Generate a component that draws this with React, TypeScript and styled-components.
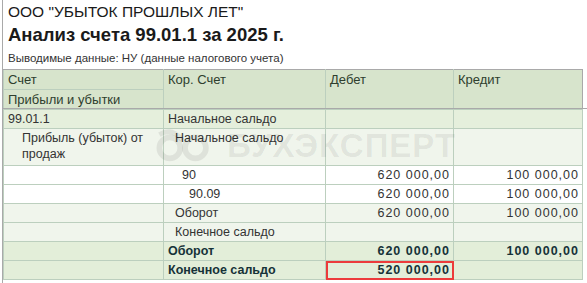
import React from 'react'
import styled, { createGlobalStyle } from 'styled-components'

const GlobalStyle = createGlobalStyle`
    html, body {
        margin: 0;
        padding: 0;
        background: #ffffff;
    }
    body {
        font-family: 'Liberation Sans', Arial, sans-serif;
        color: #333333;
    }
`

const Sheet = styled.div`
    margin-left: 2px;
    border-left: 1px solid #a9a9a9;
    height: 283px;
    overflow: hidden;
    position: relative;
`

const Heading = styled.div`
    padding: 2px 0 0 5px;
    height: 68px;
    box-sizing: border-box;
`

const Company = styled.div`
    font-size: 15.5px;
    line-height: 19px;
    color: #1a1a1a;
`

const Title = styled.div`
    font-size: 18.5px;
    line-height: 24px;
    margin-top: 2px;
    font-weight: 700;
    color: #1a1a1a;
`

const Subtitle = styled.div`
    font-size: 11.5px;
    line-height: 16px;
    margin-top: 3px;
    color: #333333;
`

const TableWrap = styled.div`
    position: relative;
    margin-top: 1px;
    &::after {
        content: '';
        position: absolute;
        left: -3px;
        right: -10px;
        top: 39px;
        height: 1px;
        background: #a9a9a9;
    }
`

const Table = styled.table`
    border-collapse: collapse;
    table-layout: fixed;
    width: 579px;
    font-size: 12px;
`

const HeadCell = styled.th<{ $tall?: boolean }>`
    background: #d7e4cc;
    color: #2e3e2e;
    font-weight: 400;
    text-align: left;
    vertical-align: top;
    padding: 2px 4px 0 4px;
    height: ${p => (p.$tall ? 37 : 17)}px;
    line-height: 16px;
    border: 1px solid #bccfbe;
    border-top-color: #a9a9a9;
    font-size: 13px;
    &:last-child {
        border-right-color: #a9a9a9;
    }
`

const HeadSub = styled(HeadCell)`
    border-top-color: #bccfbe;
`

type Tone = 'group' | 'soft' | 'plain' | 'total'

const tones: Record<Tone, string> = {
    group: '#e5efdc',
    soft: '#f0f5ec',
    plain: '#ffffff',
    total: '#e3eed9',
}

const Row = styled.tr<{ $tone: Tone }>`
    background: ${p => tones[p.$tone]};
    color: ${p => (p.$tone === 'total' ? '#163238' : '#333333')};
    font-weight: ${p => (p.$tone === 'total' ? 700 : 400)};
`

const Cell = styled.td<{ $indent?: number; $num?: boolean }>`
    border: 1px solid #bccfbe;
    padding: 1px ${p => (p.$num ? 3 : 4)}px 0 ${p => 4 + (p.$indent ?? 0)}px;
    height: 19px;
    box-sizing: border-box;
    line-height: 16px;
    vertical-align: top;
    text-align: ${p => (p.$num ? 'right' : 'left')};
    letter-spacing: ${p => (p.$num ? '1px' : 'normal')};
    font-size: 12.5px;
`

const MarkedCell = styled(Cell)`
    outline: 2px solid #ec3b3b;
    outline-offset: -2px;
`

const Watermark = styled.div`
    position: absolute;
    left: 150px;
    top: 58px;
    display: flex;
    align-items: center;
    gap: 10px;
    color: rgba(0, 0, 0, 0.075);
    font-size: 33px;
    font-weight: 700;
    letter-spacing: 1px;
    pointer-events: none;
`

const Logo = () => (
    <svg width="64" height="38" viewBox="0 0 66 40" fill="none">
        <circle cx="17" cy="22" r="11" stroke="rgba(0,0,0,0.075)" strokeWidth="6" />
        <circle cx="44" cy="22" r="11" stroke="rgba(0,0,0,0.075)" strokeWidth="6" />
        <path d="M6 8 Q 20 0 30 14" stroke="rgba(0,0,0,0.075)" strokeWidth="5" />
    </svg>
)

type Line = {
    account?: string
    accIndent?: number
    corr?: string
    corrIndent?: number
    debit?: string
    credit?: string
    tone: Tone
    tall?: boolean
    marked?: boolean
}

const lines: Line[] = [
    { account: '99.01.1', corr: 'Начальное сальдо', tone: 'group' },
    { account: 'Прибыль (убыток) от продаж', accIndent: 14, corr: 'Начальное сальдо', corrIndent: 7, tone: 'soft', tall: true },
    { corr: '90', corrIndent: 14, debit: '620 000,00', credit: '100 000,00', tone: 'plain' },
    { corr: '90.09', corrIndent: 21, debit: '620 000,00', credit: '100 000,00', tone: 'plain' },
    { corr: 'Оборот', corrIndent: 7, debit: '620 000,00', credit: '100 000,00', tone: 'soft' },
    { corr: 'Конечное сальдо', corrIndent: 7, tone: 'soft' },
    { corr: 'Оборот', debit: '620 000,00', credit: '100 000,00', tone: 'total' },
    { corr: 'Конечное сальдо', debit: '520 000,00', tone: 'total', marked: true },
]

const App = () => {
    return (
        <Sheet>
            <GlobalStyle />
            <Heading>
                <Company>ООО "УБЫТОК ПРОШЛЫХ ЛЕТ"</Company>
                <Title>Анализ счета 99.01.1 за 2025 г.</Title>
                <Subtitle>Выводимые данные: НУ (данные налогового учета)</Subtitle>
            </Heading>
            <TableWrap>
                <Table>
                    <colgroup>
                        <col style={{ width: 160 }} />
                        <col style={{ width: 162 }} />
                        <col style={{ width: 128 }} />
                        <col style={{ width: 129 }} />
                    </colgroup>
                    <thead>
                        <tr>
                            <HeadCell>Счет</HeadCell>
                            <HeadCell rowSpan={2} $tall>Кор. Счет</HeadCell>
                            <HeadCell rowSpan={2} $tall>Дебет</HeadCell>
                            <HeadCell rowSpan={2} $tall>Кредит</HeadCell>
                        </tr>
                        <tr>
                            <HeadSub>Прибыли и убытки</HeadSub>
                        </tr>
                    </thead>
                    <tbody>
                        {lines.map((l, i) => (
                            <Row key={i} $tone={l.tone}>
                                <Cell $indent={l.accIndent} style={l.tall ? { height: 37 } : undefined}>{l.account}</Cell>
                                <Cell $indent={l.corrIndent}>{l.corr}</Cell>
                                {l.marked ? <MarkedCell $num>{l.debit}</MarkedCell> : <Cell $num>{l.debit}</Cell>}
                                <Cell $num>{l.credit}</Cell>
                            </Row>
                        ))}
                    </tbody>
                </Table>
                <Watermark>
                    <Logo />
                    <span>БУХЭКСПЕРТ</span>
                </Watermark>
            </TableWrap>
        </Sheet>
    )
}

export default App
